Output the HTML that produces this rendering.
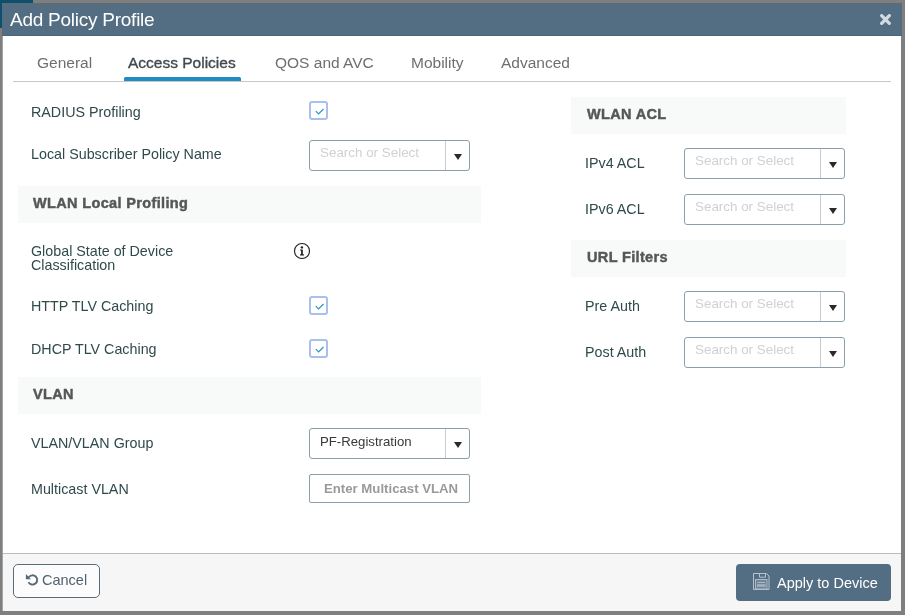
<!DOCTYPE html>
<html><head><meta charset="utf-8">
<style>
*{box-sizing:border-box;margin:0;padding:0}
html,body{width:905px;height:615px;overflow:hidden}
body{position:relative;background:#7f7f7f;font-family:"Liberation Sans",sans-serif}
.a{position:absolute}
.t,.lbl,.ph{will-change:transform}
.t{position:absolute;white-space:nowrap;line-height:20px}
body{-webkit-font-smoothing:antialiased}
.lbl{font-size:14.3px;color:#304a4b}
.tab{font-size:15.5px;color:#6b6f73}
.sec{position:absolute;background:#f8f9f9;height:37px}
.sech{font-size:14.5px;font-weight:bold;color:#575656;letter-spacing:0.35px;-webkit-text-stroke:0.45px #575656}
.sel{position:absolute;width:161px;height:31px;border:1px solid #8ca0a9;border-radius:3px;background:#fff}
.sel .dv{position:absolute;right:23px;top:0;bottom:0;width:1px;background:#c9cdd0}
.sel .ar{position:absolute;right:7.5px;top:12.5px;width:0;height:0;border-left:4px solid transparent;border-right:4px solid transparent;border-top:6px solid #2a2a2a}
.ph{position:absolute;left:10px;white-space:nowrap;line-height:20px;font-size:13.4px;color:#cfd1d3}
.cb{position:absolute;width:19px;height:19px;border:2px solid #a9c0ee;border-radius:3px;background:#fff}
</style></head><body>
<!-- background bits -->
<div class="a" style="left:0;top:0;width:33px;height:28px;background:#0d4f6e"></div>
<div class="a" style="left:0;top:28px;width:2px;height:587px;background:#817e7c"></div>

<!-- dialog -->
<div class="a" style="left:2px;top:3px;width:899px;height:608px;background:#fff;border-left:1px solid #9aa6ae"></div>
<div class="a" style="left:2px;top:3px;width:900px;height:33px;background:#536d83;border-top:2px solid #5a6b7a;border-bottom:1px solid #4b6479"></div>
<div class="t" style="left:10px;top:10.4px;font-size:19px;letter-spacing:-0.25px;color:#fff">Add Policy Profile</div>
<svg class="a" style="left:880px;top:14px" width="12" height="12" viewBox="0 0 12 12"><path d="M1.7 1.7L9.3 9.3M9.3 1.7L1.7 9.3" stroke="#d3dbe2" stroke-width="3.3" stroke-linecap="round"/></svg>

<!-- tabs -->
<div class="t tab" style="left:37px;top:52.6px">General</div>
<div class="t tab" style="left:128px;top:52.6px;color:#42484e;-webkit-text-stroke:0.35px #42484e">Access Policies</div>
<div class="t tab" style="left:275px;top:52.6px">QOS and AVC</div>
<div class="t tab" style="left:411px;top:52.6px">Mobility</div>
<div class="t tab" style="left:501px;top:52.6px">Advanced</div>
<div class="a" style="left:13px;top:81px;width:878px;height:1px;background:#c6c8ca"></div>
<div class="a" style="left:124px;top:77px;width:117px;height:4px;background:#1f8cc4;border-radius:1.5px 1.5px 0 0"></div>

<!-- left column -->
<div class="t lbl" style="left:31px;top:102px">RADIUS Profiling</div>
<div class="cb" style="left:309px;top:101px"><svg class="a" style="left:2px;top:3px" width="12" height="10" viewBox="0 0 12 10"><path d="M2.8 5.2L5.6 8L10.5 3" fill="none" stroke="#3192c4" stroke-width="1.2"/></svg></div>

<div class="t lbl" style="left:31px;top:144.2px">Local Subscriber Policy Name</div>
<div class="sel" style="left:309px;top:140px"><div class="ph" style="top:2px">Search or Select</div><div class="dv"></div><div class="ar"></div></div>

<div class="sec" style="left:18px;top:186px;width:463px"></div>
<div class="t sech" style="left:33px;top:193.2px">WLAN Local Profiling</div>

<div class="a lbl" style="left:31px;top:243.5px;line-height:14px;white-space:nowrap">Global State of Device<br>Classification</div>
<svg class="a" style="left:293px;top:242px" width="18" height="18" viewBox="0 0 18 18"><circle cx="9" cy="9" r="7.5" fill="none" stroke="#1e1e1e" stroke-width="1.1"/><circle cx="8.9" cy="5.4" r="1.2" fill="#1e1e1e"/><path d="M7.1 7.4H9.8V12.2H10.9V13.4H7.1V12.2H8.1V8.6H7.1Z" fill="#1e1e1e"/></svg>

<div class="t lbl" style="left:31px;top:295.5px">HTTP TLV Caching</div>
<div class="cb" style="left:309px;top:296px"><svg class="a" style="left:2px;top:3px" width="12" height="10" viewBox="0 0 12 10"><path d="M2.8 5.2L5.6 8L10.5 3" fill="none" stroke="#3192c4" stroke-width="1.2"/></svg></div>

<div class="t lbl" style="left:31px;top:338.6px">DHCP TLV Caching</div>
<div class="cb" style="left:309px;top:339px"><svg class="a" style="left:2px;top:3px" width="12" height="10" viewBox="0 0 12 10"><path d="M2.8 5.2L5.6 8L10.5 3" fill="none" stroke="#3192c4" stroke-width="1.2"/></svg></div>

<div class="sec" style="left:18px;top:377px;width:463px"></div>
<div class="t sech" style="left:33px;top:383.6px">VLAN</div>

<div class="t lbl" style="left:31px;top:433px">VLAN/VLAN Group</div>
<div class="sel" style="left:309px;top:428px"><div class="ph" style="top:2.5px;color:#383838;font-size:13.2px">PF-Registration</div><div class="dv"></div><div class="ar"></div></div>

<div class="t lbl" style="left:31px;top:479px">Multicast VLAN</div>
<div class="a" style="left:309px;top:474px;width:161px;height:29px;border:1px solid #8ca0a9;border-radius:2px;background:#fff"><div class="ph" style="left:14px;top:4px;color:#9a9a9a;font-weight:bold;font-size:13.2px">Enter Multicast VLAN</div></div>

<!-- right column -->
<div class="sec" style="left:571px;top:97px;width:275px"></div>
<div class="t sech" style="left:587px;top:104px">WLAN ACL</div>

<div class="t lbl" style="left:585px;top:152.6px">IPv4 ACL</div>
<div class="sel" style="left:684px;top:148px;height:31px"><div class="ph" style="top:2px">Search or Select</div><div class="dv"></div><div class="ar"></div></div>

<div class="t lbl" style="left:585px;top:199px">IPv6 ACL</div>
<div class="sel" style="left:684px;top:194px;height:31px"><div class="ph" style="top:2px">Search or Select</div><div class="dv"></div><div class="ar"></div></div>

<div class="sec" style="left:571px;top:240px;width:275px"></div>
<div class="t sech" style="left:587px;top:246.6px">URL Filters</div>

<div class="t lbl" style="left:585px;top:296px">Pre Auth</div>
<div class="sel" style="left:684px;top:291px;height:31px"><div class="ph" style="top:2px">Search or Select</div><div class="dv"></div><div class="ar"></div></div>

<div class="t lbl" style="left:585px;top:342.4px">Post Auth</div>
<div class="sel" style="left:684px;top:337px;height:31px"><div class="ph" style="top:2px">Search or Select</div><div class="dv"></div><div class="ar"></div></div>

<!-- footer -->
<div class="a" style="left:3px;top:553px;width:898px;height:58px;background:#f6f6f6;border-top:1px solid #b9bcbf"></div>
<div class="a" style="left:13px;top:564px;width:87px;height:34px;border:1px solid #5b6c79;border-radius:5px;background:#fcfcfc"></div>
<svg class="a" style="left:25px;top:573px" width="14" height="14" viewBox="0 0 14 14"><path d="M3.7 4.3A4.65 4.65 0 1 1 3.5 9.3" fill="none" stroke="#56697a" stroke-width="1.9"/><path d="M0.9 0.9V6.3H5.9Z" fill="#56697a"/></svg>
<div class="t" style="left:42px;top:570px;font-size:14.5px;color:#4f6272">Cancel</div>

<div class="a" style="left:736px;top:564px;width:155px;height:37px;background:#536d83;border-radius:4px"></div>
<svg class="a" style="left:752px;top:572px" width="19" height="19" viewBox="0 0 19 19"><path d="M1.5 1.5H14.5L17 4V17.5H1.5Z" fill="none" stroke="#b7c4cf" stroke-width="1"/><path d="M7.5 1.5V5.2H13.5V1.5" fill="none" stroke="#b7c4cf" stroke-width="1"/><rect x="3.5" y="7.5" width="11.5" height="9.5" fill="#6f8597" stroke="#aebcc8" stroke-width="1"/><path d="M5.5 10.4H13" stroke="#b7c4cf" stroke-width="0.9"/><rect x="5" y="12.2" width="8.5" height="2.6" fill="#a3b1bd"/></svg>
<div class="t" style="left:777px;top:572.5px;font-size:14.5px;color:#fff">Apply to Device</div>
</body></html>
